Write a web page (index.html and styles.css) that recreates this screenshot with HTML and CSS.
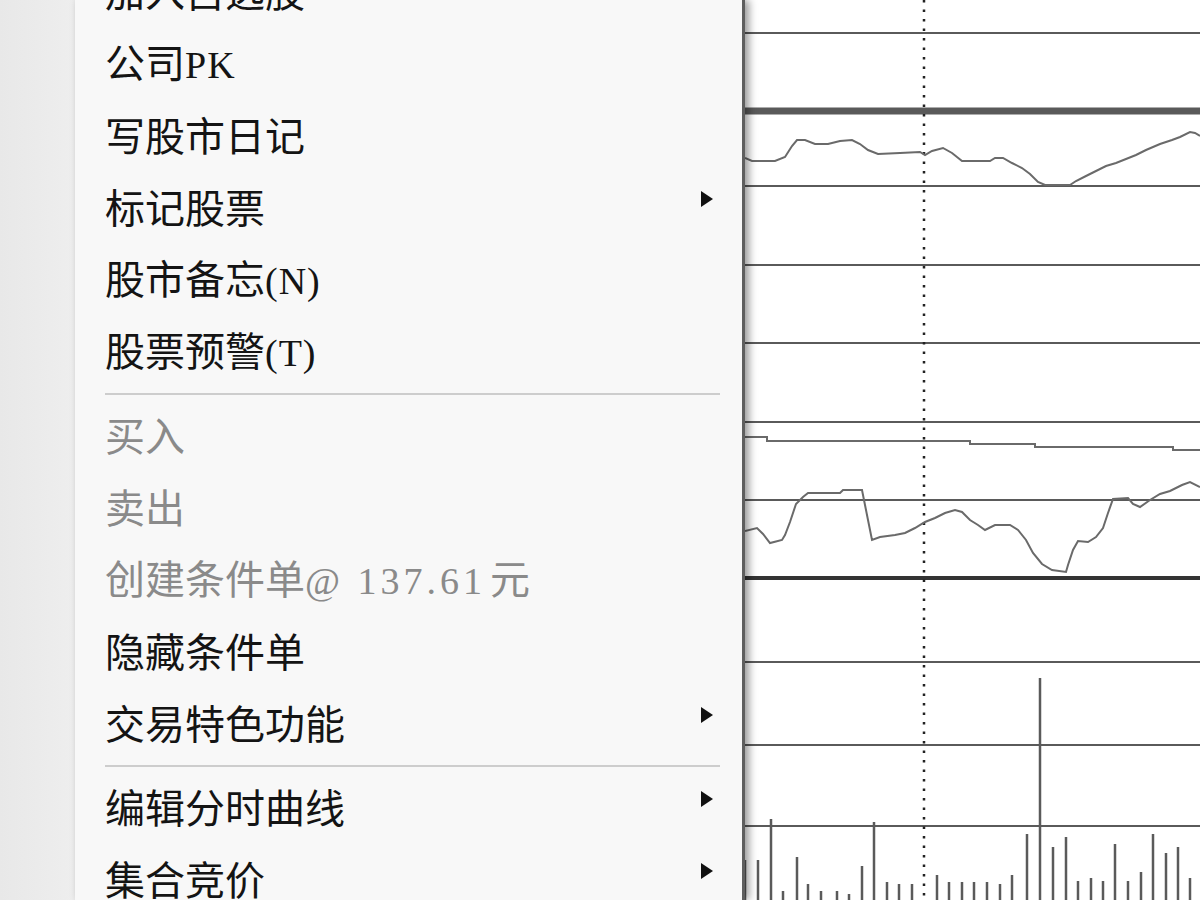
FILE: index.html
```html
<!DOCTYPE html>
<html lang="zh-CN">
<head>
<meta charset="utf-8">
<title>分时走势 - 右键菜单</title>
<link rel="stylesheet" href="styles.css">
</head>
<body>
  <div class="gutter"></div>

  <nav class="menu">
    <ul class="menu-list">
      <li class="item"><span>加入自选股</span></li>
      <li class="item"><span>公司<span class="lat">PK</span></span></li>
      <li class="item"><span>写股市日记</span></li>
      <li class="item"><span>标记股票</span><svg class="arrow" viewBox="0 0 12 16"><polygon points="0,0 12,8 0,16"/></svg></li>
      <li class="item"><span>股市备忘<span class="lat">(N)</span></span></li>
      <li class="item"><span>股票预警<span class="lat">(T)</span></span></li>
      <li class="sep"></li>
      <li class="item disabled"><span>买入</span></li>
      <li class="item disabled"><span>卖出</span></li>
      <li class="item disabled"><span>创建条件单<span class="lat price">@ 137.61</span>元</span></li>
      <li class="item"><span>隐藏条件单</span></li>
      <li class="item"><span>交易特色功能</span><svg class="arrow" viewBox="0 0 12 16"><polygon points="0,0 12,8 0,16"/></svg></li>
      <li class="sep"></li>
      <li class="item"><span>编辑分时曲线</span><svg class="arrow" viewBox="0 0 12 16"><polygon points="0,0 12,8 0,16"/></svg></li>
      <li class="item"><span>集合竞价</span><svg class="arrow" viewBox="0 0 12 16"><polygon points="0,0 12,8 0,16"/></svg></li>
    </ul>
  </nav>

  <section class="chart">
    <svg class="chart-svg" viewBox="745 0 455 900" width="455" height="900">
      <!-- grid -->
      <g class="grid">
        <line x1="745" x2="1200" y1="33" y2="33"/>
        <line x1="745" x2="1200" y1="111" y2="111" class="heavy"/>
        <line x1="745" x2="1200" y1="186" y2="186"/>
        <line x1="745" x2="1200" y1="265" y2="265"/>
        <line x1="745" x2="1200" y1="343" y2="343"/>
        <line x1="745" x2="1200" y1="422" y2="422"/>
        <line x1="745" x2="1200" y1="500" y2="500"/>
        <line x1="745" x2="1200" y1="578" y2="578" class="axis"/>
        <line x1="745" x2="1200" y1="662" y2="662"/>
        <line x1="745" x2="1200" y1="745" y2="745"/>
        <line x1="745" x2="1200" y1="826" y2="826"/>
      </g>

      <!-- cursor -->
      <line class="cursor" x1="924" x2="924" y1="0" y2="900"/>

      <!-- price line -->
      <polyline class="curve" points="745,158 752,161 775,161 785,157 792,146 797,140 805,140 815,144 828,144 840,141 852,140 860,144 868,150 878,154 900,153 920,152 925,155 932,151 943,148 952,153 962,161 990,161 995,158 1003,158 1012,163 1022,168 1030,174 1038,182 1045,185 1070,185 1076,181 1086,176 1096,171 1106,166 1116,163 1126,159 1136,155 1146,150 1160,144 1172,140 1180,137 1190,132 1195,133 1200,136"/>

      <!-- average line -->
      <polyline class="curve" points="745,437 767,437 767,441 970,441 970,444 1035,444 1035,447 1173,447 1173,450 1200,450"/>

      <!-- indicator line -->
      <polyline class="curve" points="745,531 757,528 763,534 770,543 782,540 785,535 790,522 796,504 803,497 808,493 840,493 843,490 862,490 864,500 868,520 872,540 880,537 895,535 905,533 915,528 925,522 935,518 945,513 955,510 962,512 970,520 978,525 985,530 995,525 1010,525 1018,530 1026,540 1033,553 1042,564 1052,570 1066,572 1068,565 1073,550 1078,541 1088,542 1096,537 1103,528 1108,513 1113,499 1128,498 1133,504 1140,507 1150,500 1160,494 1170,491 1182,485 1190,482 1200,487"/>

      <!-- volume -->
      <g class="bars">
        <line x1="745" x2="745" y1="860" y2="900"/>
        <line x1="758" x2="758" y1="860" y2="900"/>
        <line x1="771" x2="771" y1="819" y2="900"/>
        <line x1="783" x2="783" y1="891" y2="900"/>
        <line x1="797" x2="797" y1="857" y2="900"/>
        <line x1="808" x2="808" y1="884" y2="900"/>
        <line x1="821" x2="821" y1="891" y2="900"/>
        <line x1="837" x2="837" y1="891" y2="900"/>
        <line x1="849" x2="849" y1="894" y2="900"/>
        <line x1="862" x2="862" y1="866" y2="900"/>
        <line x1="874" x2="874" y1="822" y2="900"/>
        <line x1="887" x2="887" y1="882" y2="900"/>
        <line x1="899" x2="899" y1="884" y2="900"/>
        <line x1="912" x2="912" y1="884" y2="900"/>
        <line x1="937" x2="937" y1="875" y2="900"/>
        <line x1="949" x2="949" y1="882" y2="900"/>
        <line x1="962" x2="962" y1="882" y2="900"/>
        <line x1="974" x2="974" y1="882" y2="900"/>
        <line x1="987" x2="987" y1="882" y2="900"/>
        <line x1="1000" x2="1000" y1="884" y2="900"/>
        <line x1="1012" x2="1012" y1="875" y2="900"/>
        <line x1="1027" x2="1027" y1="834" y2="900"/>
        <line x1="1040" x2="1040" y1="678" y2="900"/>
        <line x1="1053" x2="1053" y1="847" y2="900"/>
        <line x1="1066" x2="1066" y1="837" y2="900"/>
        <line x1="1078" x2="1078" y1="881" y2="900"/>
        <line x1="1091" x2="1091" y1="878" y2="900"/>
        <line x1="1103" x2="1103" y1="881" y2="900"/>
        <line x1="1115" x2="1115" y1="844" y2="900"/>
        <line x1="1128" x2="1128" y1="881" y2="900"/>
        <line x1="1141" x2="1141" y1="872" y2="900"/>
        <line x1="1153" x2="1153" y1="834" y2="900"/>
        <line x1="1166" x2="1166" y1="853" y2="900"/>
        <line x1="1178" x2="1178" y1="847" y2="900"/>
        <line x1="1190" x2="1190" y1="878" y2="900"/>
      </g>
    </svg>
  </section>
</body>
</html>
```

FILE: styles.css
```css
html, body {
  margin: 0;
  padding: 0;
}

body {
  width: 1200px;
  height: 900px;
  overflow: hidden;
  display: flex;
  background: #ffffff;
  font-family: "Noto Sans CJK SC", "Noto Sans CJK JP", sans-serif;
}

/* left strip beside the menu */
.gutter {
  flex: none;
  width: 75px;
  background: linear-gradient(to right, #e8e8e8, #eeeeee);
}

/* context menu */
.menu {
  flex: none;
  box-sizing: border-box;
  width: 670px;
  height: 900px;
  padding: 0 29px 0 30px;
  background: #f8f8f8;
  border-right: 3px solid #5e5e5e;
  box-shadow: 4px 0 8px rgba(0, 0, 0, 0.4);
  position: relative;
  z-index: 1;
  overflow: hidden;
}

.menu-list {
  list-style: none;
  margin: -46px 0 0 0;
  padding: 0;
}

.item {
  height: 72px;
  display: flex;
  align-items: center;
  justify-content: space-between;
  font-size: 40px;
  line-height: 1;
  color: #141414;
  white-space: nowrap;
}

.item.disabled {
  color: #8a8a8a;
}

/* half-width latin in menu labels */
.lat {
  font-family: "Liberation Serif", serif;
  font-size: 38px;
  letter-spacing: 1px;
}

.lat.price {
  letter-spacing: 4px;
  margin-right: 4px;
}

.arrow {
  width: 12px;
  height: 16px;
  margin-bottom: 14px;
  fill: #111111;
}

.sep {
  height: 2px;
  margin: 7px -7px 3px 0;
  background: #cdcdcd;
}

/* time-share chart */
.chart {
  flex: 1;
  background: #ffffff;
}

.chart-svg {
  display: block;
}

.grid line {
  stroke: #5a5a5a;
  stroke-width: 2;
}

.grid line.heavy {
  stroke-width: 7;
}

.grid line.axis {
  stroke: #333333;
  stroke-width: 4;
}

.cursor {
  stroke: #222222;
  stroke-width: 2.5;
  stroke-dasharray: 2.5 7;
}

.curve {
  fill: none;
  stroke: #6a6a6a;
  stroke-width: 2;
  stroke-linejoin: miter;
}

.bars line {
  stroke: #5a5a5a;
  stroke-width: 2.5;
}
```
